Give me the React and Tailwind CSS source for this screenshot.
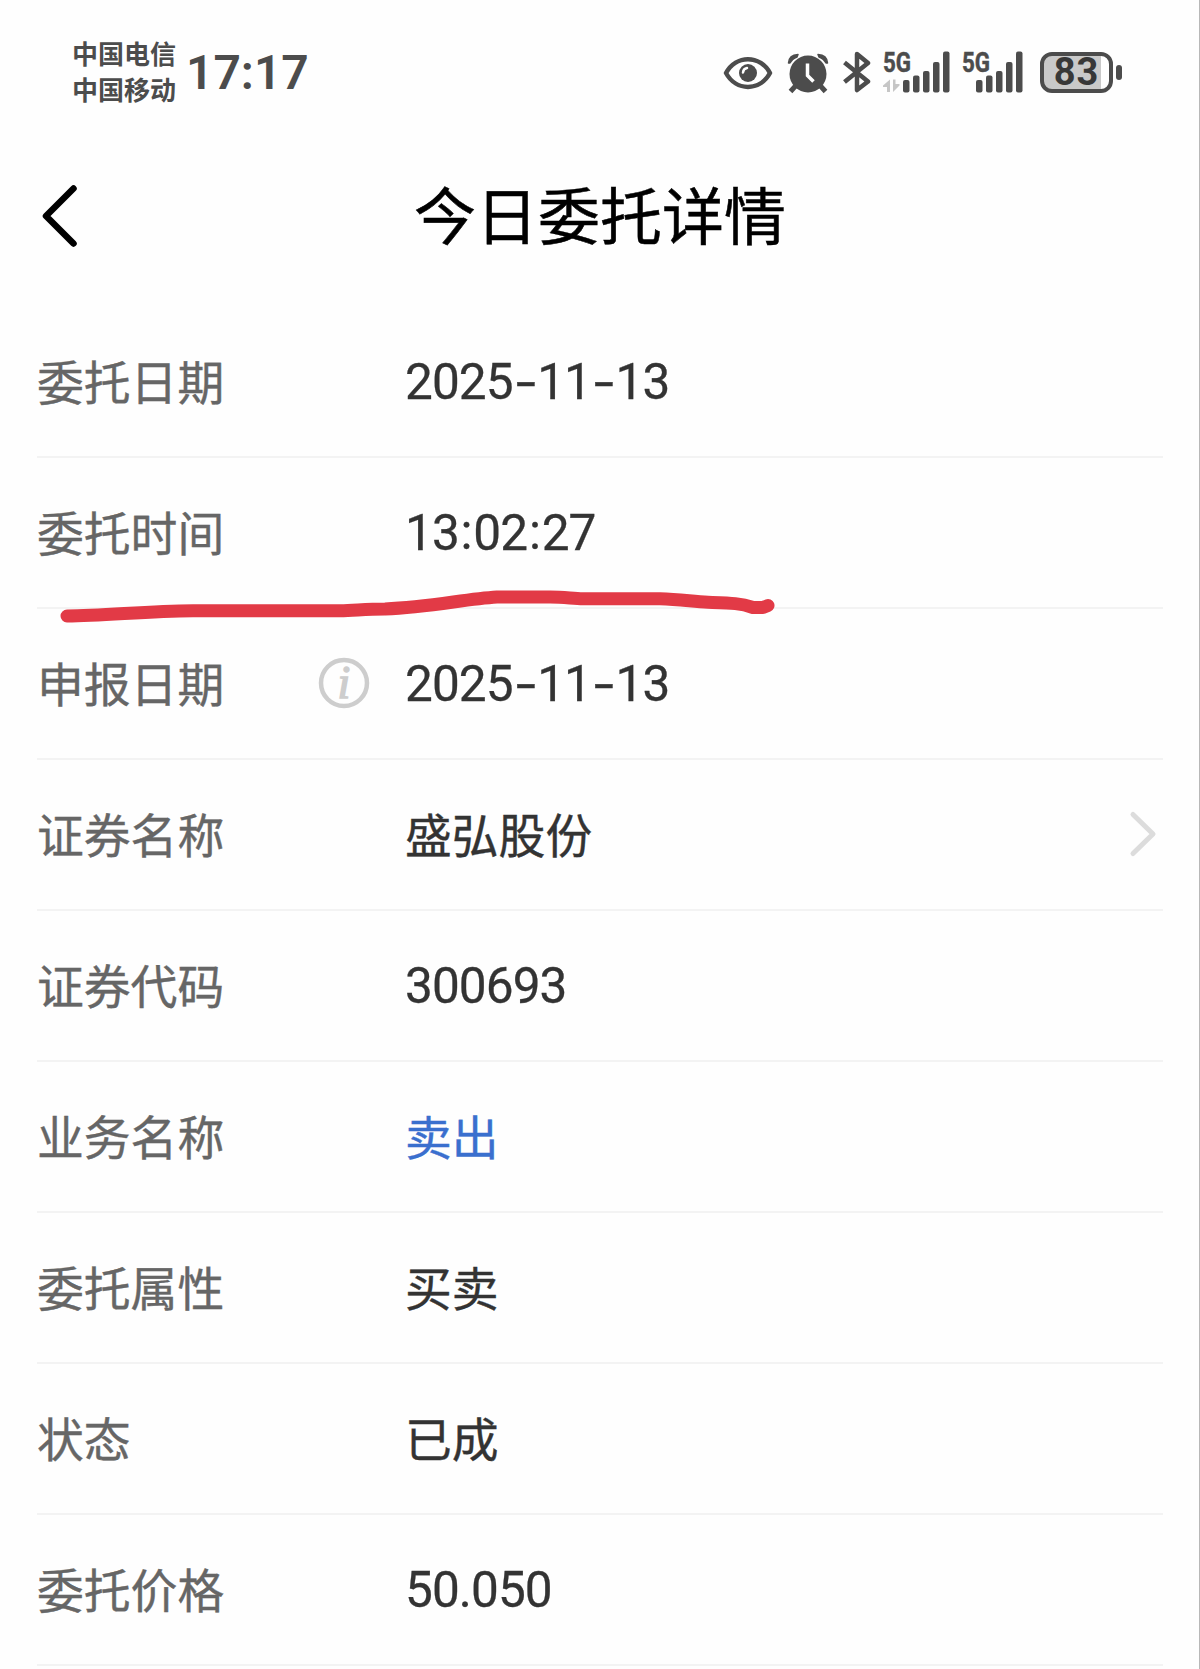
const rows = [
  { label: '委托日期', value: '2025-11-13' },
  { label: '委托时间', value: '13:02:27' },
  { label: '申报日期', value: '2025-11-13', info: true },
  { label: '证券名称', value: '盛弘股份', link: true },
  { label: '证券代码', value: '300693' },
  { label: '业务名称', value: '卖出', sell: true },
  { label: '委托属性', value: '买卖' },
  { label: '状态', value: '已成' },
  { label: '委托价格', value: '50.050' },
];

function Signal({ data, className }) {
  return (
    <svg viewBox="0 0 68 42" className={`h-[42px] w-[68px] shrink-0 overflow-visible ${className}`} fill="#4c4c4c">
      <text x="0" y="20.5" fontFamily="Roboto, sans-serif" fontWeight="700" fontSize="28" textLength="28" lengthAdjust="spacingAndGlyphs" stroke="#4c4c4c" strokeWidth="0.5">5G</text>
      {data && (
        <path d="M7 28.500v12.500H4v-5H0v-1.500zM10 28.500h2.500v4.500h4v1.500L10 41z" fill="#c6c6c6" />
      )}
      <rect x={data ? 20 : 14} y="29" width="6.5" height="12.5" rx="2" />
      <rect x={data ? 30 : 24} y="24.5" width="6.5" height="17" rx="2" />
      <rect x={data ? 40 : 34} y="20" width="6.5" height="21.5" rx="2" />
      <rect x={data ? 50 : 44} y="11" width="6.5" height="30.5" rx="2" />
      <rect x={data ? 60 : 54} y="0.5" width="6.5" height="41" rx="2" />
    </svg>
  );
}

function StatusBar() {
  return (
    <div className="flex h-[144px] items-center pl-[72px] text-[#4c4c4c]">
      <div className="-mt-[3px] text-[26px] leading-[36px] font-bold">
        <div>中国电信</div>
        <div>中国移动</div>
      </div>
      <div className="mt-px ml-[10px] font-[Roboto,sans-serif] text-[48px] leading-[48px] font-semibold">17:17</div>

      <div className="mr-[77px] ml-auto flex items-center">
        <svg viewBox="0 0 50 34" className="mt-px h-[34px] w-[50px]" fill="none">
          <path d="M3 17C13-1.500 37-1.500 47 17C37 35.500 13 35.500 3 17z" stroke="#4c4c4c" strokeWidth="4.500" strokeLinejoin="round" />
          <circle cx="25" cy="17" r="9" fill="#4c4c4c" />
          <path d="M20 16.500a5 5 0 0 1 4-4.500" stroke="#fff" strokeWidth="2.500" strokeLinecap="round" />
        </svg>
        <svg viewBox="0 0 42 42" className="mt-[2px] ml-[14px] h-[42px] w-[42px]" fill="none" stroke="#4c4c4c">
          <circle cx="21" cy="22" r="18.500" fill="#4c4c4c" stroke="none" />
          <path d="M1.500 11Q2 3 11 2.500L10 5Q5 7 3 11zM40.500 11Q40 3 31 2.500L32 5Q37 7 39 11z" fill="#4c4c4c" strokeWidth="1.500" strokeLinejoin="round" />
          <path d="M8.500 34l-5 5.500M33.500 34l5 5.500" strokeWidth="5" />
          <path d="M20.500 11.500v12l6 6" stroke="#fff" strokeWidth="3.500" />
        </svg>
        <svg viewBox="0 0 28 42" className="ml-[14px] h-[42px] w-[28px]" fill="none" stroke="#4c4c4c" strokeWidth="4.500" strokeLinejoin="round">
          <path d="M1.500 11.500L25 30.500L14 39V3L25 12L1.500 31" />
        </svg>
        <Signal data className="ml-[12px]" />
        <Signal className="ml-[11px]" />
        <div className="ml-[10px] flex items-center gap-[3px]">
          <div className="flex h-[41px] w-[73px] items-center justify-center overflow-hidden rounded-[12px] border-4 border-[#4c4c4c] bg-linear-to-r from-[#c9c9c9] from-88% to-white to-88% font-[Roboto,sans-serif] text-[38px] leading-none font-bold tracking-[1px] text-[#383838]">
            83
          </div>
          <div className="h-[15px] w-[6px] rounded-full bg-[#4c4c4c]" />
        </div>
      </div>
    </div>
  );
}

function Value({ text }) {
  return text.split('').map((ch, i) => {
    if (ch === '-') {
      return (
        <span key={i} className="inline-block w-[24.500px] text-center">
          <span className="inline-block scale-x-[1.450]">-</span>
        </span>
      );
    }
    if (ch === ':') {
      return <span key={i} className="inline-block w-[14.500px] -translate-y-px text-center">:</span>;
    }
    return ch;
  });
}

function Row({ label, value, info, link, sell }) {
  return (
    <div className="flex h-[151px] items-center border-b-2 border-[#f3f3f3] text-[46.800px] leading-none">
      <div className="-mt-[2px] w-[282px] text-[#666] [-webkit-text-stroke:0.400px]">{label}</div>
      <div className="w-[86px]">
        {info && (
          <svg viewBox="0 0 52 52" className="-mt-[2px] -ml-px h-[52px] w-[52px]">
            <circle cx="26" cy="26" r="23" fill="none" stroke="#cdcdcd" strokeWidth="4.500" />
            <text x="26" y="40.500" textAnchor="middle" fontFamily="Liberation Serif, serif" fontStyle="italic" fontSize="46" fill="#cdcdcd" stroke="#cdcdcd" strokeWidth="1.5">i</text>
          </svg>
        )}
      </div>
      {/\d/.test(value) ? (
        <div className="mt-[2px] font-[Roboto,sans-serif] text-[49.500px] tracking-[-0.900px] text-[#333] [-webkit-text-stroke:0.300px]"><Value text={value} /></div>
      ) : (
        <div className={`-mt-[2px] [-webkit-text-stroke:0.400px] ${sell ? 'text-[#3a6fce]' : 'text-[#333]'}`}>{value}</div>
      )}
      {link && (
        <svg viewBox="0 0 28 48" className="-mt-[2px] mr-[6px] ml-auto h-[48px] w-[28px]" fill="none" stroke="#dcdcdc" strokeWidth="5" strokeLinecap="round" strokeLinejoin="round">
          <path d="M4 4.500l20 19.500L4 43.500" />
        </svg>
      )}
    </div>
  );
}

export default function App() {
  return (
    <div className="relative h-[1669px] w-[1200px] overflow-hidden border-r border-[#b8b8b8] bg-[#fefefe] font-['Noto_Sans_CJK_SC',sans-serif]">
      <StatusBar />

      <header className="flex h-[144px] items-center pl-[39px]">
        <svg viewBox="0 0 40 64" className="h-[64px] w-[40px]" fill="none" stroke="#000" strokeWidth="6.500" strokeLinecap="round" strokeLinejoin="round">
          <path d="M34.500 4.500L7 32l27.500 27.500" />
        </svg>
        <h1 className="-mt-[6px] ml-[335px] text-[62px] leading-none font-normal text-black [-webkit-text-stroke:0.500px]">今日委托详情</h1>
      </header>

      <main className="mt-[19px] ml-[37px] w-[1126px]">
        {rows.map((row) => (
          <Row key={row.label} {...row} />
        ))}
      </main>

      {/* hand-drawn marker under the order time */}
      <svg viewBox="0 0 720 40" className="absolute top-[585px] left-[55px] h-[40px] w-[720px]" fill="none">
        <path d="M12 31C50 31 90 26 138 25.700H285C300 25.500 310 24 330 24C375 22 410 14 442 12H495C510 12 518 13.700 528 13.700H605C625 14.500 638 16.500 653 17.300C675 18 685 18 698 22.500H708L713 20.500" stroke="#e23a46" strokeWidth="13" strokeLinecap="round" strokeLinejoin="round" />
      </svg>
    </div>
  );
}
